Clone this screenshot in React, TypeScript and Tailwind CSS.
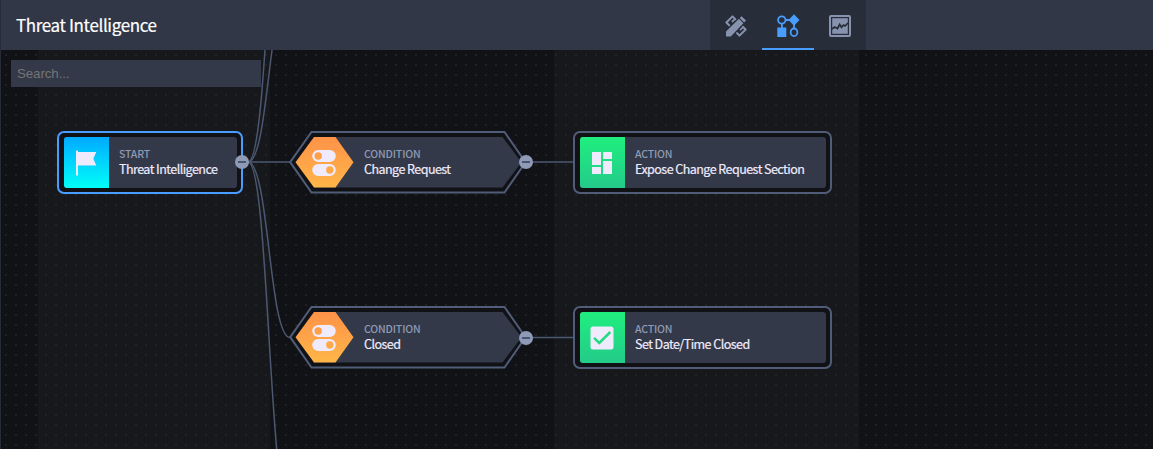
import React from "react";

const DesignIcon = () => (
  <svg width="22" height="22" viewBox="0 0 22 22" fill="none">
    <path d="M1.400 7.500L7.500 1.400 20.600 14.500 14.500 20.600z" stroke="#8792ae" strokeWidth="2" strokeLinejoin="round" />
    <path d="M9.800 4.200L7 7M18 12.200L15 15.200" stroke="#8792ae" strokeWidth="1.800" />
    <path d="M1 21.500V16.500L16.500 1.200 21 5.500 5.800 21.500z" fill="#8792ae" stroke="#272d39" strokeWidth="2.600" paintOrder="stroke" strokeLinejoin="round" />
    <path d="M14 3.200L19 8.200" stroke="#272d39" strokeWidth="1.100" />
  </svg>
);

const FlagIcon = () => (
  <svg width="24" height="26" viewBox="0 0 24 26" fill="#efeafc">
    <path d="M2 1.200a1 1 0 0 1 2 0V2h18.300l-3 6.700 3 6.800H4V25.500H2z" />
  </svg>
);

const TogglesIcon = () => (
  <svg width="24" height="26" viewBox="0 0 24 26" fill="#efeafc">
    <path
      fillRule="evenodd"
      d="M6.200 0h11.600a6 6 0 0 1 0 12H6.200a6 6 0 0 1 0-12zM6.200 2.300a3.700 3.700 0 1 0 0 7.400 3.700 3.700 0 0 0 0-7.400zM6.200 14h11.600a6 6 0 0 1 0 12H6.200a6 6 0 0 1 0-12zM17.800 16.300a3.700 3.700 0 1 0 0 7.400 3.700 3.700 0 0 0 0-7.400z"
    />
  </svg>
);

const SectionIcon = () => (
  <svg width="20" height="22" viewBox="0 0 20 22" fill="#efeafc">
    <path d="M0 0h9v13H0zM0 15h9v7H0zM11 0h9v7h-9zM11 9h9v13h-9z" />
  </svg>
);

const CheckIcon = () => (
  <svg width="24" height="24" viewBox="0 0 24 24" fill="none">
    <rect x="0.500" y="0.500" width="23" height="23" rx="2.500" fill="#efeafc" />
    <path d="M4 11.800l5.300 5.200L20.300 6" stroke="#22db84" strokeWidth="2.500" />
  </svg>
);

const FlowIcon = () => (
  <svg width="24" height="24" viewBox="0 0 24 24" fill="#489dff">
    <circle cx="5.800" cy="6" r="3.700" fill="none" stroke="#489dff" strokeWidth="1.800" />
    <path d="M5 9.500h1.800V14H5zM9.500 5.100H14v1.800H9.500zM17.100 9.500h1.800V14h-1.800z" />
    <path d="M1.300 13.600h9V23h-9zM18 .3L23.500 6 18 11.700 12.500 6z" />
    <ellipse cx="18" cy="18.300" rx="3.400" ry="3.800" fill="none" stroke="#489dff" strokeWidth="1.800" />
  </svg>
);

const ReportIcon = () => (
  <svg width="22" height="22" viewBox="0 0 22 22" fill="none">
    <rect x="1" y="1" width="20" height="20" rx="1" stroke="#8792ae" strokeWidth="2" />
    <rect x="3.200" y="3.200" width="15.600" height="15.600" fill="#8792ae" />
    <path d="M3 14l2.500-2 3 1.500 2.200-4 1.800 2.800 2-2.300 1.500 1L19 8" stroke="#272d39" strokeWidth="1.700" />
  </svg>
);

const Caption = ({ kind, title }: { kind: string; title: string }) => (
  <div className="flex flex-col pb-[3px] whitespace-nowrap">
    <span className="text-[10.500px] leading-[15px] font-medium tracking-[-0.150px] text-[#8f9ab4]">{kind}</span>
    <span className="text-[12.500px] leading-[15px] tracking-[-0.540px] text-[#efeafc] [-webkit-text-stroke:0.200px_#efeafc]">{title}</span>
  </div>
);

const Handle = ({ className }: { className: string }) => (
  <div className={`absolute flex h-[14px] w-[14px] items-center justify-center rounded-full bg-[#8e9ab6] ${className}`}>
    <div className="h-[2px] w-2 bg-[#4a5670]" />
  </div>
);

function Card({ className, border, iconBg, icon, kind, title }: {
  className: string; border: string; iconBg: string; icon: React.ReactNode; kind: string; title: string;
}) {
  return (
    <div className={`absolute h-[63px] rounded-[7px] border-2 bg-[#111216] p-1 pl-[4.500px] ${border} ${className}`}>
      <div className="flex h-full overflow-hidden rounded-[3px] bg-[#333948]">
        <div className={`flex w-[45px] shrink-0 items-center justify-center bg-linear-to-b ${iconBg}`}>{icon}</div>
        <div className="flex items-center pl-[10.500px]">
          <Caption kind={kind} title={title} />
        </div>
      </div>
    </div>
  );
}

function Condition({ className, title }: { className: string; title: string }) {
  return (
    <div className={`absolute left-[289px] h-[63px] w-[238px] ${className}`}>
      <svg className="absolute inset-0" width="238" height="63" viewBox="0 0 238 63">
        <defs>
          <linearGradient id="amber" x1="0" y1="0" x2="0" y2="1">
            <stop offset="0" stopColor="#ff9248" />
            <stop offset="1" stopColor="#ffb648" />
          </linearGradient>
        </defs>
        <path d="M1.200 31.200L22.500 1H215.500L236.500 31.200 215.500 61.500H22.500z" fill="#111216" stroke="#505c78" strokeWidth="2" />
        <path d="M25 6H213.500L232.500 31.200 213.500 56.500H25z" fill="#333948" />
        <path d="M6.500 31.200L25 6H46.500L64.500 31.200 46.500 56.500H25z" fill="url(#amber)" />
      </svg>
      <div className="relative flex h-full items-center">
        <div className="flex w-[70px] justify-center"><TogglesIcon /></div>
        <div className="pl-[5px]">
          <Caption kind="CONDITION" title={title} />
        </div>
      </div>
    </div>
  );
}

export default function App() {
  return (
    <div className="flex h-[449px] w-[1153px] flex-col overflow-hidden border-l border-[#252b37] bg-[#111216] font-['Noto_Sans_CJK_SC',sans-serif]">
      <header className="flex h-[50px] shrink-0 bg-[#313747]">
        <h1 className="flex w-[709px] items-center pl-[15px] text-[17px] tracking-[-0.370px] text-white [-webkit-text-stroke:0.200px_white]">Threat Intelligence</h1>
        <nav className="flex w-[156px] bg-[#272d39]">
          <button className="flex w-[52px] items-center justify-center pt-[2px]">
            <DesignIcon />
          </button>
          <button className="flex w-[52px] items-center justify-center border-b-2 border-[#489dff] pt-[4px]">
            <FlowIcon />
          </button>
          <button className="flex w-[52px] items-center justify-center pt-[2px]">
            <ReportIcon />
          </button>
        </nav>
      </header>
      <main className="relative -ml-px flex-1 overflow-hidden">
        <div className="flex h-full">
          <div className="ml-[38px] w-[232px] bg-[#17181b]" />
          <div className="ml-[284px] w-[305px] bg-[#17181b]" />
        </div>
        <svg className="absolute inset-0" width="1153" height="399">
          <defs>
            <pattern id="dots" width="10" height="10" patternUnits="userSpaceOnUse">
              <rect x="5" y="4" width="2" height="2" fill="#202227" />
            </pattern>
          </defs>
          <rect width="1153" height="399" fill="url(#dots)" />
          <g fill="none" stroke="#4c5871" strokeWidth="1.500">
            <path d="M248 112H290M526 112H574M526 287.500H574" />
            <path d="M248 112C269 112 269 287.500 290 287.500" />
            <path d="M248 112C269 112 269 463 290 463" />
            <path d="M248 112C269 112 269 -63.500 290 -63.500" />
            <path d="M248 112C269 112 269 -239 290 -239" />
          </g>
        </svg>
        <div className="absolute left-0 top-0 h-full w-px bg-[#252b37]" />
        <input
          placeholder="Search..."
          className="absolute left-[11px] top-[10px] h-[27px] w-[250px] bg-[#333948] px-[6px] font-['Liberation_Sans',sans-serif] text-[13.333px] tracking-[-0.100px] text-white placeholder:text-[#757575]"
        />
        <Card className="left-[57px] top-[81px] w-[186px]" border="border-[#489dff]" iconBg="from-[#00a9ff] to-[#00fff8]" icon={<FlagIcon />} kind="START" title="Threat Intelligence" />
        <Condition className="top-[81px]" title="Change Request" />
        <Condition className="top-[256px]" title="Closed" />
        <Card className="left-[573px] top-[81px] w-[259px]" border="border-[#505c78]" iconBg="from-[#20ee7e] to-[#23cb89]" icon={<SectionIcon />} kind="ACTION" title="Expose Change Request Section" />
        <Card className="left-[573px] top-[256px] w-[259px]" border="border-[#505c78]" iconBg="from-[#20ee7e] to-[#23cb89]" icon={<CheckIcon />} kind="ACTION" title="Set Date/Time Closed" />
        <Handle className="left-[234.500px] top-[105px]" />
        <Handle className="left-[519px] top-[105px]" />
        <Handle className="left-[519px] top-[280.500px]" />
      </main>
    </div>
  );
}
